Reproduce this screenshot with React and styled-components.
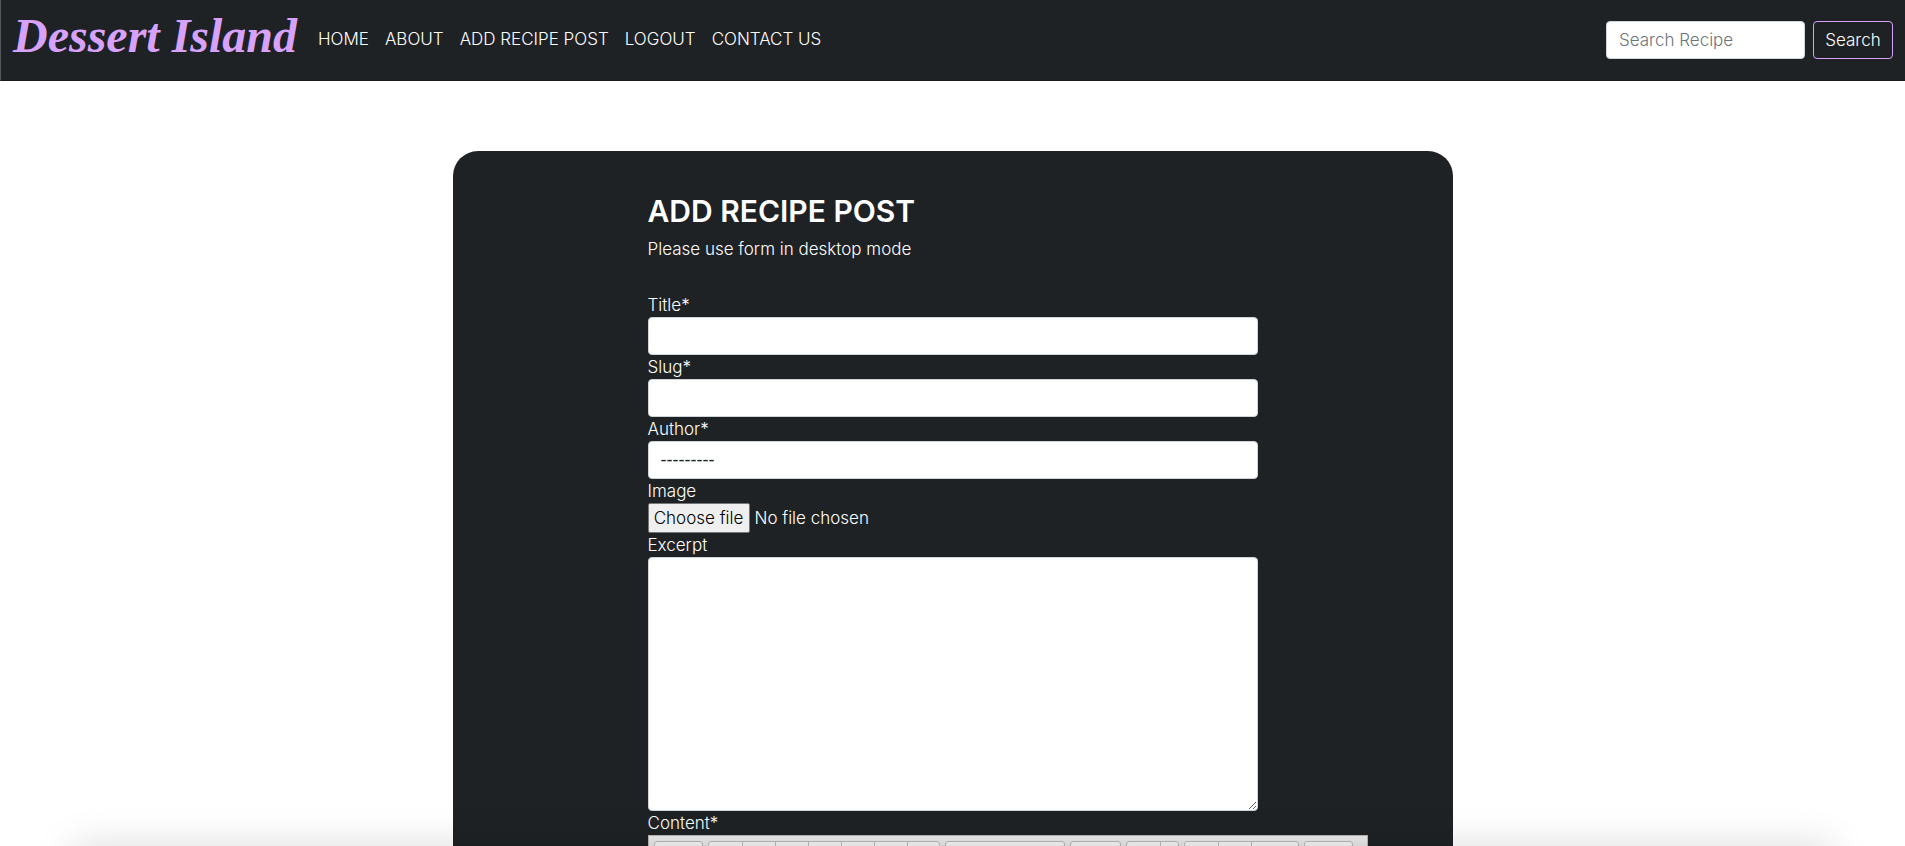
import React, { useId, useState } from "react";
import styled, { createGlobalStyle } from "styled-components";

const ink = "#1e2224";
const lilac = "#d6a2fb";
const fieldBorder = "#ced4da";

const GlobalStyle = createGlobalStyle`
  *, *::before, *::after { box-sizing: border-box; }
  body {
    margin: 0;
    background: #fff;
    color: #fff;
    font: 300 17px/24px Inter, "Liberation Sans", sans-serif;
  }
  button, input, select, textarea { font: inherit; }
`;

const Page = styled.div`
  position: relative;
  height: 100vh;
  overflow: hidden;
`;

const Navbar = styled.header`
  display: flex;
  align-items: center;
  height: 81px;
  padding: 0 12px;
  background: ${ink};
  border-bottom: 1px solid #191b1e;
  border-left: 1px solid #54575a;
`;

const Brand = styled.a`
  width: 290px;
  margin-right: 7px;
  padding-bottom: 8px;
  color: ${lilac};
  font: italic 700 48px/56px "Liberation Serif", cursive;
  text-decoration: none;
  white-space: nowrap;
`;

const NavLinks = styled.nav`
  display: flex;
  flex: 1;
`;

const NavLink = styled.a`
  padding: 7px 8px 9px;
  color: #fff;
  text-decoration: none;
  white-space: nowrap;
`;

const SearchForm = styled.form`
  display: flex;
  gap: 8px;
`;

const Control = styled.input`
  display: block;
  width: ${(p) => p.$width || "100%"};
  height: 38px;
  padding: 6px 12px;
  border: 1px solid ${fieldBorder};
  border-radius: 4px;
  background: #fff;
  color: #212529;
  &::placeholder { color: #6c757d; opacity: 1; }
`;

const Dropdown = styled(Control)`
  appearance: none;
  font: 400 18px/24px "Liberation Sans", sans-serif;
`;

const TextArea = styled(Control)`
  height: 254px;
  resize: vertical;
`;

const SearchButton = styled.button`
  width: 80px;
  height: 38px;
  padding: 0;
  border: 1px solid ${lilac};
  border-radius: 4px;
  background: transparent;
  color: #fff;
`;

const Card = styled.main`
  max-width: 1000px;
  margin: 70px auto 0;
  padding: 40px 195px;
  border-radius: 25px;
  background: ${ink};
`;

const Heading = styled.h1`
  margin: 0 0 6px;
  font-size: 30px;
  font-weight: 600;
  line-height: 40px;
  white-space: nowrap;
`;

const Intro = styled.p`
  margin: 0 0 32px;
`;

const Label = styled.label`
  display: block;
`;

const FilePicker = styled.div`
  position: relative;
  display: flex;
  align-items: center;
  gap: 5px;
  height: 30px;
`;

const FileInput = styled.input`
  position: absolute;
  inset: 0;
  width: 100%;
  opacity: 0;
`;

const FileButton = styled.span`
  width: 102px;
  border: 1px solid #767676;
  border-radius: 2px;
  background: #efefef;
  color: #000;
  line-height: 28px;
  text-align: center;
`;

const Editor = styled.div`
  width: 720px;
  border: 1px solid #b6b6b6;
  background: #fff;
`;

const Toolbar = styled.div`
  display: flex;
  gap: 5px;
  padding: 5px;
  background: linear-gradient(#ebebeb, #d8d8d8);
`;

const ToolGroup = styled.div`
  display: flex;
  border: 1px solid #b9b9b9;
  border-radius: 3px;
  background: #f4f4f4;
`;

const Tool = styled.button`
  width: ${(p) => p.$width}px;
  height: 28px;
  padding: 0;
  border: 0;
  background: transparent;
  & + & { border-left: 1px solid #b9b9b9; }
`;

const EditorBody = styled.div`
  height: 300px;
`;

const BottomShade = styled.div`
  position: fixed;
  top: 100%;
  left: 72px;
  right: 72px;
  height: 80px;
  box-shadow: 0 0 40px rgba(0, 0, 0, 0.14);
  pointer-events: none;
`;

const links = ["HOME", "ABOUT", "ADD RECIPE POST", "LOGOUT", "CONTACT US"];

const toolGroups = [
  [47],
  [33, 33, 33, 33, 33, 33, 32],
  [118],
  [49],
  [33, 18],
  [33, 33, 47],
  [47],
];

function Field({ label, children }) {
  const id = useId();
  return (
    <>
      <Label htmlFor={id}>{label}</Label>
      {children(id)}
    </>
  );
}

export default function App() {
  const [fileName, setFileName] = useState("No file chosen");

  return (
    <Page>
      <GlobalStyle />
      <Navbar>
        <Brand href="#">Dessert Island</Brand>
        <NavLinks>
          {links.map((text) => (
            <NavLink href="#" key={text}>{text}</NavLink>
          ))}
        </NavLinks>
        <SearchForm role="search">
          <Control $width="199px" type="search" placeholder="Search Recipe" aria-label="Search Recipe" />
          <SearchButton type="submit">Search</SearchButton>
        </SearchForm>
      </Navbar>

      <Card>
        <Heading>ADD RECIPE POST</Heading>
        <Intro>Please use form in desktop mode</Intro>
        <form>
          <Field label="Title*">{(id) => <Control id={id} type="text" />}</Field>
          <Field label="Slug*">{(id) => <Control id={id} type="text" />}</Field>
          <Field label="Author*">
            {(id) => (
              <Dropdown as="select" id={id}>
                <option>---------</option>
              </Dropdown>
            )}
          </Field>
          <Field label="Image">
            {(id) => (
              <FilePicker>
                <FileButton>Choose file</FileButton>
                <span>{fileName}</span>
                <FileInput
                  id={id}
                  type="file"
                  onChange={(e) => setFileName(e.target.files[0]?.name || "No file chosen")}
                />
              </FilePicker>
            )}
          </Field>
          <Field label="Excerpt">{(id) => <TextArea as="textarea" id={id} />}</Field>
          <Field label="Content*">
            {(id) => (
              <Editor>
                <Toolbar role="toolbar">
                  {toolGroups.map((tools, g) => (
                    <ToolGroup key={g}>
                      {tools.map((width, t) => (
                        <Tool key={t} type="button" $width={width} />
                      ))}
                    </ToolGroup>
                  ))}
                </Toolbar>
                <EditorBody id={id} contentEditable suppressContentEditableWarning />
              </Editor>
            )}
          </Field>
        </form>
      </Card>
      <BottomShade />
    </Page>
  );
}
